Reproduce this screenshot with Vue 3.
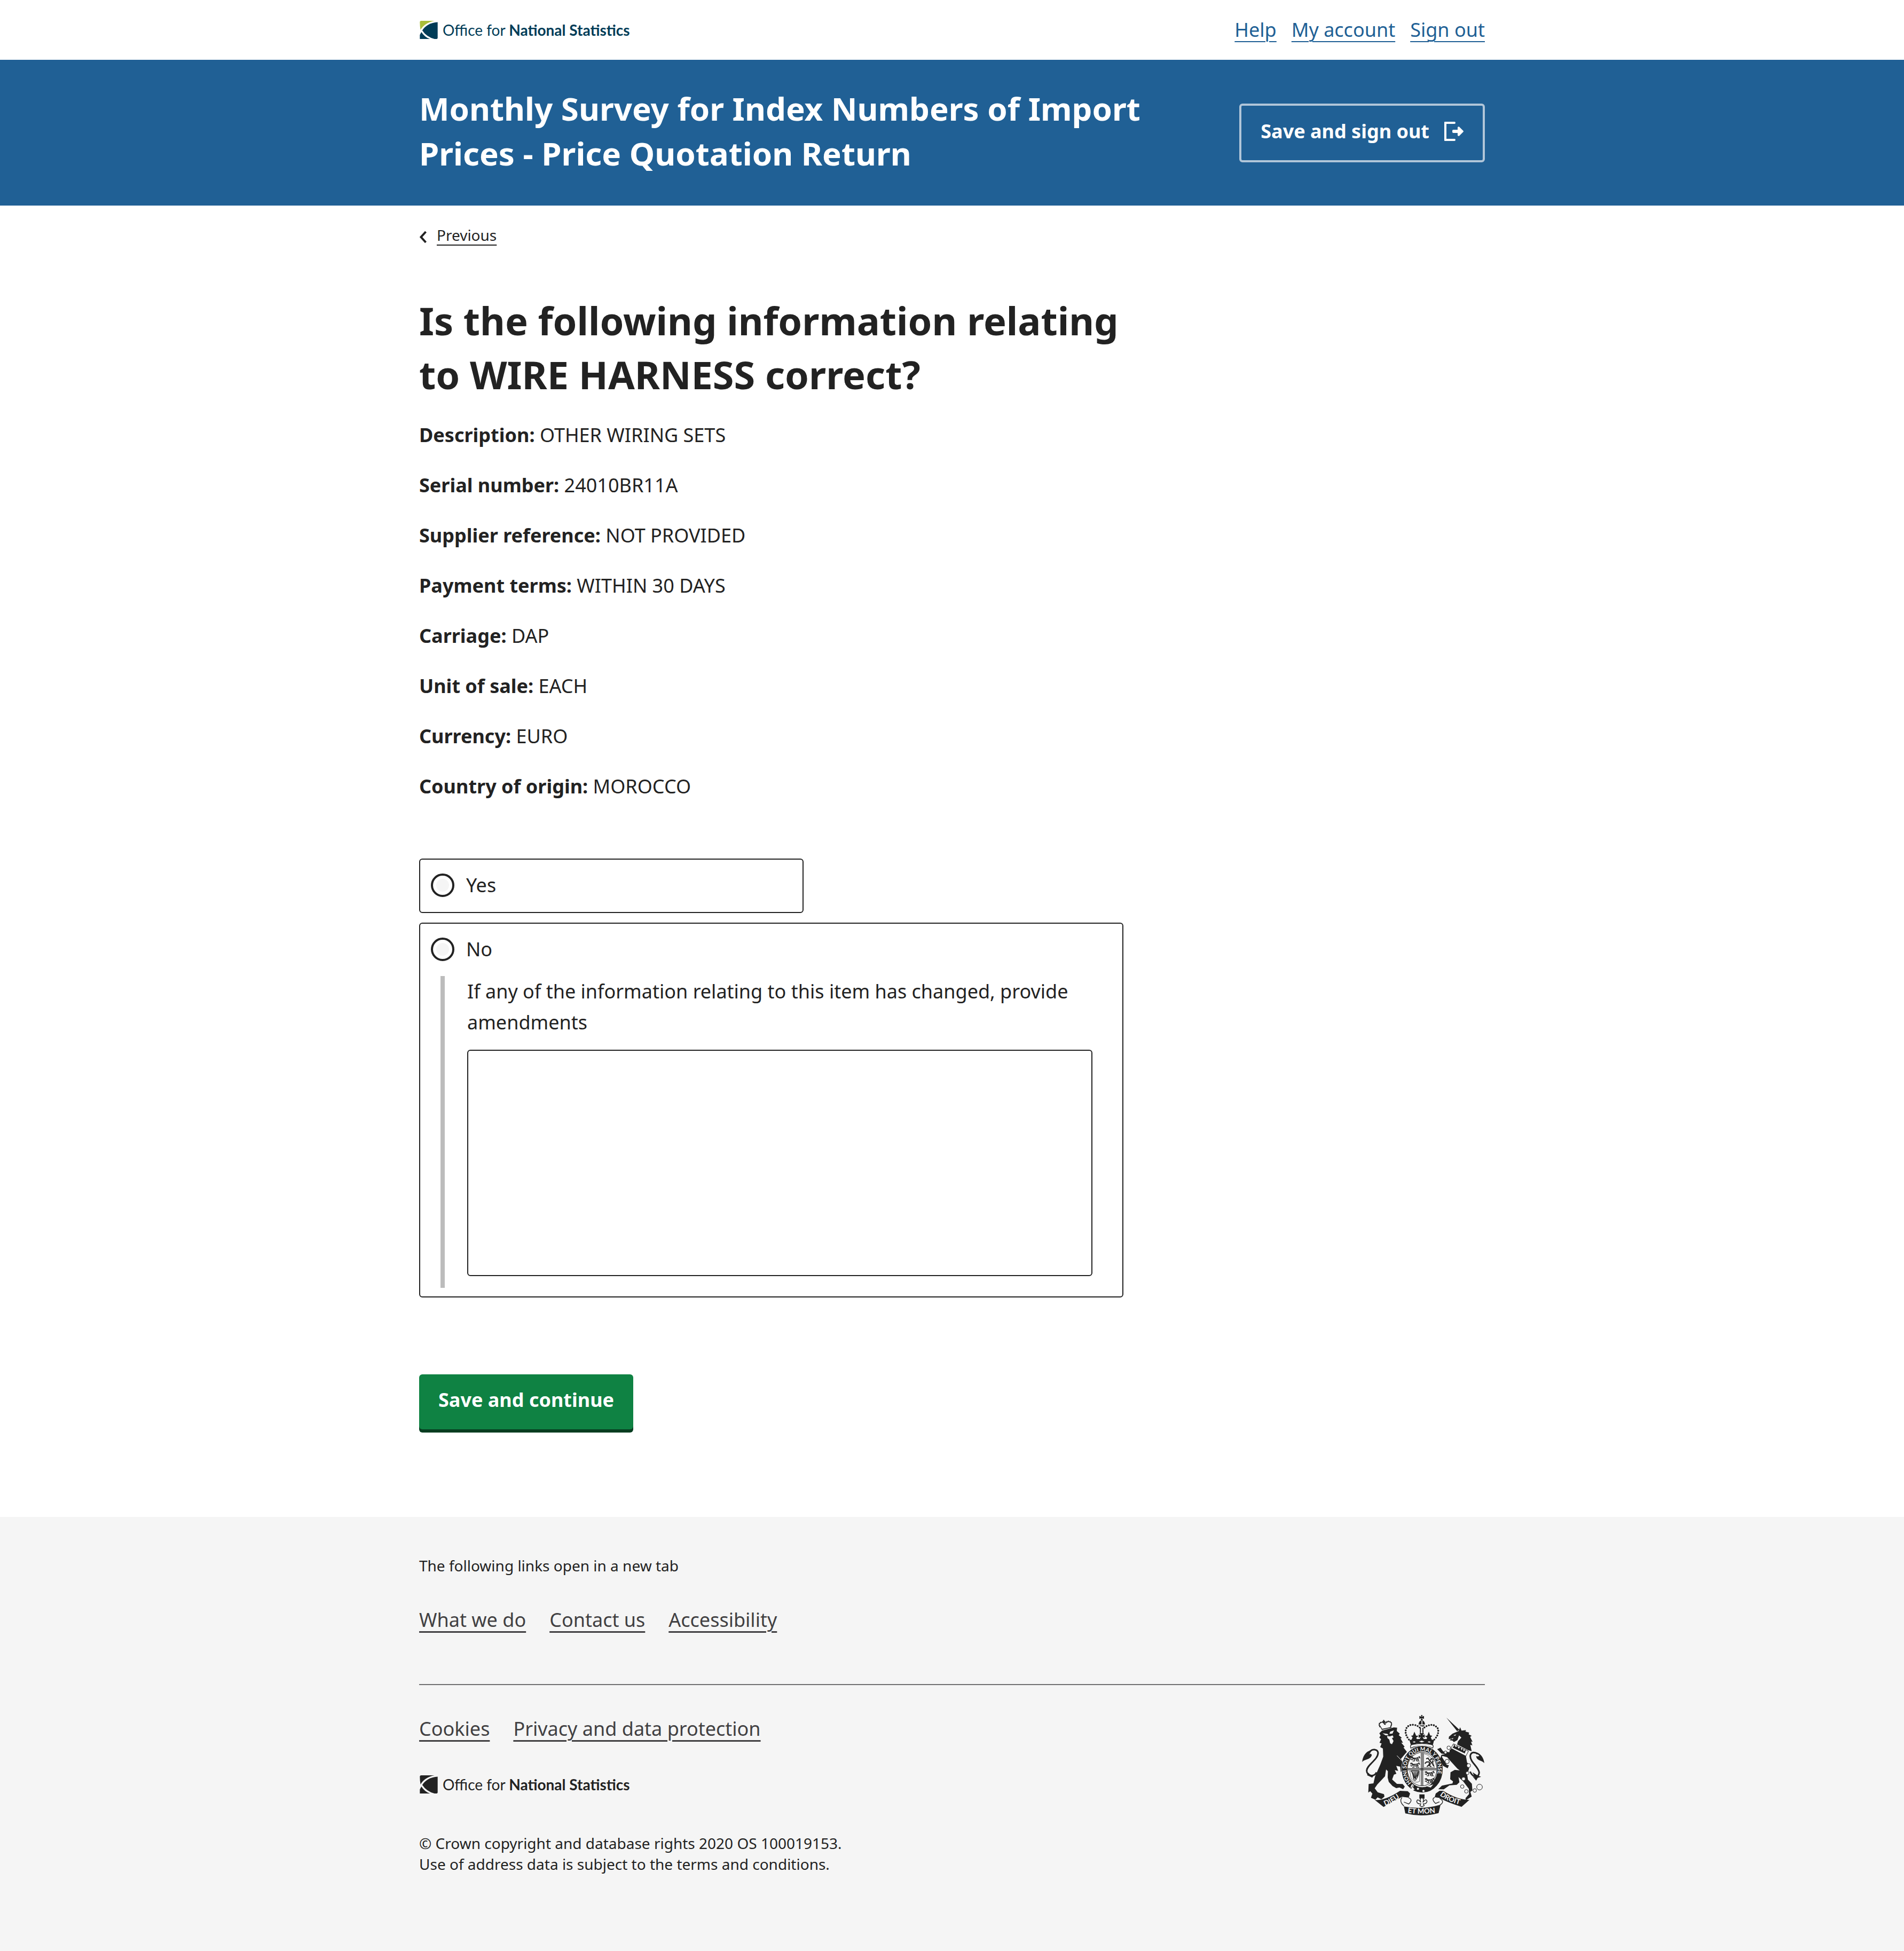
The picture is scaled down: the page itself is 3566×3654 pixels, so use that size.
<script setup>
import { ref } from 'vue'

const accountLinks = ['Help', 'My account', 'Sign out']
const details = [
  { term: 'Description:', value: 'OTHER WIRING SETS' },
  { term: 'Serial number:', value: '24010BR11A' },
  { term: 'Supplier reference:', value: 'NOT PROVIDED' },
  { term: 'Payment terms:', value: 'WITHIN 30 DAYS' },
  { term: 'Carriage:', value: 'DAP' },
  { term: 'Unit of sale:', value: 'EACH' },
  { term: 'Currency:', value: 'EURO' },
  { term: 'Country of origin:', value: 'MOROCCO' }
]
const aboutLinks = ['What we do', 'Contact us', 'Accessibility']
const legalLinks = ['Cookies', 'Privacy and data protection']
const answer = ref('')
const amendments = ref('')
</script>

<template>
  <div class="page">
    <header>
      <div class="container masthead">
        <a class="logo" href="#">
          <svg class="logo-mark" viewBox="0 0 102 104" aria-hidden="true">
            <path class="leaf" d="M0 8Q0 0 8 0H84Q26 12 4 52Q0 30 0 8Z" />
            <path d="M102 8V96Q102 104 93 104H84Q38 92 14 55Q42 12 102 8Z" />
            <path d="M9 64Q28 94 58 104H0V80Z" />
          </svg>
          <span>Office for <b>National Statistics</b></span>
        </a>
        <nav class="account" aria-label="Account">
          <a v-for="link in accountLinks" :key="link" href="#">{{ link }}</a>
        </nav>
      </div>
      <div class="banner">
        <div class="container banner-row">
          <p class="survey-title">Monthly Survey for Index Numbers of Import Prices - Price Quotation Return</p>
          <button class="exit" type="button">
            Save and sign out
            <svg class="exit-icon" viewBox="0 0 36 36" aria-hidden="true">
              <path d="M1 0H19Q21 0 21 2Q21 4 19 4H4V32H19Q21 32 21 34Q21 36 19 36H1Q0 36 0 35V1Q0 0 1 0Z" />
              <path d="M17 15H25V10.500Q26 8.500 28 9.500L35.500 17Q36.500 18 35.500 19L28 26.500Q26 27.500 25 25.500V21H17Q15 21 15 19V17Q15 15 17 15Z" />
            </svg>
          </button>
        </div>
      </div>
    </header>

    <main class="container">
      <a class="previous" href="#">
        <svg viewBox="0 0 14 24" aria-hidden="true"><path d="M12 2L3 12L12 22" /></svg>
        <span>Previous</span>
      </a>
      <form class="question" @submit.prevent>
        <h1>Is the following information relating to WIRE HARNESS correct?</h1>
        <p v-for="item in details" :key="item.term" class="detail">
          <strong>{{ item.term }}</strong> {{ item.value }}
        </p>
        <div class="options" role="radiogroup" aria-label="Is the information correct?">
          <div class="option option-short">
            <label class="option-label" for="answer-yes">
              <input id="answer-yes" v-model="answer" type="radio" name="answer" value="yes" />
              Yes
            </label>
          </div>
          <div class="option">
            <label class="option-label" for="answer-no">
              <input id="answer-no" v-model="answer" type="radio" name="answer" value="no" />
              No
            </label>
            <div class="other">
              <label for="amendments">If any of the information relating to this item has changed, provide amendments</label>
              <textarea id="amendments" v-model="amendments"></textarea>
            </div>
          </div>
        </div>
        <button class="submit" type="submit">Save and continue</button>
      </form>
    </main>

    <footer>
      <div class="container">
        <p class="small">The following links open in a new tab</p>
        <nav class="footer-links" aria-label="About">
          <a v-for="link in aboutLinks" :key="link" href="#">{{ link }}</a>
        </nav>
        <hr />
        <div class="footer-base">
          <div>
            <nav class="footer-links" aria-label="Legal">
              <a v-for="link in legalLinks" :key="link" href="#">{{ link }}</a>
            </nav>
            <a class="logo logo-mono" href="#">
              <svg class="logo-mark" viewBox="0 0 102 104" aria-hidden="true">
                <path d="M0 8Q0 0 8 0H84Q26 12 4 52Q0 30 0 8Z" />
                <path d="M102 8V96Q102 104 93 104H84Q38 92 14 55Q42 12 102 8Z" />
                <path d="M9 64Q28 94 58 104H0V80Z" />
              </svg>
              <span>Office for <b>National Statistics</b></span>
            </a>
            <p class="small">
              © Crown copyright and database rights 2020 OS 100019153.<br />
              Use of address data is subject to the terms and conditions.
            </p>
          </div>
          <svg class="crest" viewBox="34 36 690 564" role="img" aria-label="Royal coat of arms">
            <defs>
              <path id="garter" d="M312 418A89 104 0 1 1 432 418" />
              <path id="dieu" d="M164 547Q217 526 272 480" />
              <path id="etmon" d="M290 585Q370 597 470 582" />
              <path id="droit" d="M470 487Q520 527 600 543" />
            </defs>
            <!-- lion -->
            <path d="M131 139L146 124L212 106L231 107L229 126L246 141L240 149L258 165L250 167L264 192L254 191L273 214L267 219L286 243L266 266L252 283L275 313L280 350L262 363L264 340L252 357L248 326L226 322L237 350L218 346L227 366L213 371L203 398L230 423L262 424L274 438L265 453L244 443L226 447L205 435L184 412L178 388L179 352L169 342L163 380L120 426L105 448L122 470L157 481L160 494L143 509L121 499L109 512L84 501L92 478L80 464L69 472L71 424L98 420L107 381L136 316L153 270L151 224L136 216L144 196L132 192L141 172L131 163L138 151Z" />
            <path class="line w9" d="M115 358C103 388 60 378 60 348C62 315 124 288 124 248C120 226 94 227 80 239" />
            <path d="M89 234C61 235 37 264 35 301C47 282 79 291 89 261Q84 247 74 259ZM70 360L84 379L105 370L91 388L62 374Z" />
            <path class="paper" d="M149 139L176 142L182 150L166 150ZM192 130L213 122L205 140L188 142ZM174 154L190 156L206 151L211 162L202 166L211 182L202 200L192 195L187 174L177 166Z" />
            <path class="light w3" d="M230 264L278 315L283 345" />
            <path class="line w4" d="M146 116L131 92Q131 78 151 76Q165 86 178 74Q203 73 200 87L192 107ZM144 118L199 105" />
            <path class="dots small-dots" d="M133 101Q122 78 148 76Q157 79 163 92Q167 70 184 71Q206 76 197 99" />
            <path d="M152 64H159V70H165V77H159V85H154V78H148V71H152Z" />
            <!-- crown -->
            <path class="dots" d="M297 174Q271 141 282 112Q297 86 330 92Q350 97 360 109M440 174Q469 144 460 112Q440 84 409 94Q392 98 382 109" />
            <path d="M365 36H374L371 46L382 41V58L371 54L376 66H363L368 54L356 58V41L368 46ZM351 89Q354 67 370 67Q386 68 388 89ZM354 94H386Q379 108 354 94ZM359 108H365V137H359ZM373 108H379V137H373ZM356 138H383L374 150L386 145V164L374 159L382 174H356L364 159L352 164V145L364 150Z" />
            <path d="M328 130L338 152L352 153L338 164L344 175H312L318 162L309 153L320 151ZM409 130L400 152L387 153L400 164L394 175H426L420 162L429 153L417 151Z" />
            <path d="M300 176Q370 165 439 176L432 204Q370 184 308 204Z" />
            <path class="line paper w4" d="M308 222Q300 203 320 201Q370 191 420 201Q441 204 431 222Q371 195 308 222Z" />
            <path class="paper" d="M318 187L328 184L336 188L326 191ZM354 185L369 180L385 185L369 190ZM402 187L411 184L421 188L411 191ZM368 68H373V94H368Z" />
            <!-- garter and shield -->
            <ellipse cx="372" cy="341" rx="117" ry="135" class="paper" />
            <ellipse cx="372" cy="341" rx="100" ry="116" class="line w30" />
            <text class="motto ring"><textPath href="#garter">HONI SOIT QUI MAL Y PENSE</textPath></text>
            <path class="paper" d="M302 452L312 426L328 424L320 444L330 454L312 463ZM398 437L434 426L420 443Z" />
            <path class="line w3" d="M309 450L325 425L314 421L305 439ZM328 441Q360 459 398 453" />
            <circle class="paper" cx="348" cy="451" r="6" /><circle class="paper" cx="379" cy="463" r="6" />
            <ellipse class="line paper w3" cx="371" cy="340" rx="83" ry="94" />
            <path class="line w4" d="M367 248V432M375 248V432M289 337H454M289 344H454" />
            <path class="line w2" d="M380 252Q430 263 441 331H380ZM302 351H357V409Q329 425 309 389Z" />
            <path class="line w4" d="M310 350L352 350Q355 374 336 401Q326 407 323 393Q321 366 310 350M319 356L328 391M327 355L332 395M335 355V395M343 354L339 387M349 355L343 381" />
            <g v-for="spot in [[304,267],[302,302],[384,350],[384,389]]" :key="spot.join('-')" :transform="`translate(${spot[0]} ${spot[1]})`">
              <path class="line w4" d="M2 6L12 4L18 11L38 10L47 15L44 27L53 28M18 10L12 21L3 18M22 13L25 27L14 28M39 15L34 24L41 29M37 10L49 5L56 12L51 0M4 11L13 9L20 15L45 18" />
            </g>
            <path class="line w6" d="M394 282L405 278L414 293L428 307L437 324M414 293L424 281L437 286M411 299L396 300L387 309M414 300L410 316L398 326M421 307L411 319L423 327M427 304L435 292" />
            <!-- unicorn -->
            <path d="M508 51L581 119L568 127ZM522 158L542 141L577 126L585 105L593 124L618 121L615 129L636 135L633 145L650 153L641 159L655 187L646 185L654 207L642 203L650 239L629 233L568 202L573 184L592 163L579 151L570 177L550 188L542 180L526 178L535 169L521 172Z" />
            <path class="paper" d="M547 150L563 145L557 153ZM536 168L549 166L540 173Z" />
            <path d="M541 220L617 264L624 303L640 319L633 345L624 367L629 399L651 422L654 460L643 468L650 494L617 515L615 503L635 481L634 451L602 409L576 385L581 414L566 428L525 431L493 454L462 453L483 433L542 421L545 409L529 397L531 358L555 344L583 347L569 337L546 311L524 287L512 273L487 266L482 270L510 316L522 319L515 335L489 322L471 286L480 260L500 256L480 253L456 228L475 220L490 241L525 245L526 234Z" />
            <path class="line paper w3" d="M547 198L632 239L617 267L533 223Z" />
            <path d="M548 213L551 200L560 216L570 210L576 225L588 215L592 234L602 223L604 240L619 229L611 252L542 219Z" />
            <path class="line w9" d="M641 354C657 389 689 391 692 360C691 329 640 301 642 265C646 241 669 244 684 255" />
            <path d="M671 245C700 249 718 276 721 307C709 288 678 296 675 266Q685 272 693 265ZM655 358L667 386L655 381L675 405L684 389L703 383L683 376Z" />
            <g class="line w3">
              <circle cx="521" cy="220" r="10" class="paper" /><circle cx="512" cy="297" r="12" class="paper" />
              <circle cx="503" cy="246" r="8" class="paper" /><circle cx="633" cy="320" r="11" class="paper" />
              <circle cx="626" cy="362" r="9" class="paper" /><circle cx="604" cy="395" r="10" class="paper" />
              <circle cx="597" cy="438" r="10" /><circle cx="620" cy="465" r="10" />
              <circle cx="667" cy="460" r="10" /><circle cx="694" cy="441" r="16" />
            </g>
            <!-- motto ribbon -->
            <path d="M105 513Q160 520 247 462L291 464L304 477L296 500L259 496Q209 520 155 553ZM637 513Q567 512 490 462H469L448 477L442 498L468 502Q515 528 593 552ZM269 550Q371 570 475 540L464 587Q371 612 277 589Z" />
            <path class="line w4" d="M259 499Q240 521 270 548M295 501Q323 512 296 536L269 525M470 504Q502 523 472 542M442 499Q421 508 447 533L469 524" />
            <path d="M356 482H385V506H356Z" />
            <path class="line paper w4" d="M370 497L380 512L376 527Q395 501 399 522Q395 537 378 535L383 545L370 552L359 545L364 535Q344 537 341 522Q346 502 364 527L360 512Z" />
            <text class="motto"><textPath href="#dieu">DIEU</textPath></text>
            <text class="motto"><textPath href="#etmon">ET MON</textPath></text>
            <text class="motto"><textPath href="#droit">DROIT</textPath></text>
          </svg>
        </div>
      </div>
    </footer>
  </div>
</template>

<style>
body {
  margin: 0;
  background: #fff;
}
</style>

<style scoped>
.page {
  color: #222;
  font: 36px/58px "Noto Sans", sans-serif;
}
h1, p { margin: 0; }
button, textarea { font: inherit; }
.container {
  box-sizing: border-box;
  width: 100%;
  max-width: 1996px;
  margin: 0 auto;
}
.masthead {
  display: flex;
  justify-content: space-between;
  align-items: center;
  padding: 27px 0;
}
.logo {
  display: flex;
  align-items: center;
  gap: 8px;
  width: max-content;
  color: #003c57;
  font: 400 28px/34px Lato, sans-serif;
  text-decoration: none;
}
.logo b { font-weight: 700; }
.logo-mark {
  width: 36px;
  height: 34px;
  fill: currentColor;
}
.logo-mark .leaf { fill: #a8bd3a; }
.account {
  display: flex;
  gap: 28px;
}
.account a {
  color: #206095;
  text-decoration-thickness: 2px;
  text-underline-offset: 8px;
}
.banner {
  padding: 49px 0 48px;
  background: #206095;
  color: #fff;
}
.banner-row {
  display: flex;
  justify-content: space-between;
  align-items: center;
}
.survey-title {
  max-width: 1400px;
  margin-bottom: 8px;
  font-size: 60px;
  font-weight: 700;
  line-height: 84px;
}
.exit {
  display: flex;
  align-items: center;
  gap: 28px;
  padding: 20px 36px 26px;
  border: 4px solid #b1c6d9;
  border-radius: 6px;
  background: transparent;
  color: #fff;
  font-weight: 700;
  line-height: 56px;
  white-space: nowrap;
}
.exit-icon {
  width: 36px;
  height: 36px;
  fill: currentColor;
}
.previous {
  display: flex;
  align-items: center;
  gap: 18px;
  width: max-content;
  margin-top: 36px;
  color: #222;
  font-size: 28px;
  line-height: 39px;
  text-decoration: none;
}
.previous svg {
  width: 15px;
  height: 24px;
  margin-top: 6px;
  fill: none;
  stroke: currentColor;
  stroke-width: 4;
}
.previous span {
  text-decoration: underline;
  text-decoration-thickness: 2px;
  text-underline-offset: 7px;
}
.question {
  max-width: 1319px;
  margin-top: 90px;
}
h1 {
  margin-bottom: 34px;
  font-size: 72px;
  font-weight: 700;
  line-height: 101px;
}
.detail + .detail { margin-top: 36px; }
.options {
  display: flex;
  flex-direction: column;
  gap: 18px;
  margin: 106px 0 144px;
}
.option {
  border: 2px solid #222;
  border-radius: 6px;
}
.option-short {
  box-sizing: border-box;
  width: 720px;
  max-width: 100%;
}
.option-label {
  display: flex;
  align-items: center;
  gap: 22px;
  padding: 20px 20px 22px;
  line-height: 56px;
}
.option-label input {
  appearance: none;
  box-sizing: border-box;
  width: 44px;
  height: 44px;
  margin: 0;
  padding: 6px;
  border: 4px solid #222;
  border-radius: 50%;
  background: #f5f5f5 content-box;
}
.option-label input:checked { background-color: #222; }
.other {
  display: flex;
  flex-direction: column;
  gap: 22px;
  margin: 0 56px 16px 38px;
  padding: 0 0 22px 42px;
  border-left: 8px solid #bcbcbc;
}
textarea {
  box-sizing: border-box;
  width: 100%;
  height: 424px;
  padding: 12px 16px;
  border: 2px solid #222;
  border-radius: 6px;
  color: inherit;
  resize: none;
}
.submit {
  display: block;
  padding: 20px 36px 27px;
  border: 0;
  border-radius: 6px;
  background: #0f8243;
  box-shadow: 0 6px 0 #073d20;
  color: #fff;
  font-weight: 700;
  line-height: 56px;
}
footer {
  margin-top: 164px;
  padding: 72px 0 143px;
  background: #f5f5f5;
}
.small {
  font-size: 28px;
  line-height: 39px;
}
.footer-links {
  display: flex;
  gap: 44px;
  margin-top: 53px;
}
.footer-links a {
  color: #414042;
  text-decoration-thickness: 3px;
  text-underline-offset: 8px;
}
hr {
  height: 2px;
  margin: 91px 0 0;
  border: 0;
  background: #707071;
}
.footer-base {
  display: flex;
  justify-content: space-between;
  align-items: flex-start;
}
.logo-mono {
  margin: 58px 0 74px;
  color: #222;
}
.crest {
  width: 230px;
  height: 188px;
  margin-top: 56px;
  fill: #222;
}
.line {
  fill: none;
  stroke: #222;
}
.paper { fill: #f5f5f5; }
.light {
  fill: none;
  stroke: #f5f5f5;
}
.w2 { stroke-width: 2; }
.w3 { stroke-width: 3; }
.w4 { stroke-width: 4; }
.w6 { stroke-width: 6; }
.w9 { stroke-width: 9; }
.w30 { stroke-width: 30; }
.dots {
  fill: none;
  stroke: #222;
  stroke-width: 11;
  stroke-linecap: round;
  stroke-dasharray: 0 14;
}
.small-dots {
  stroke-width: 7;
  stroke-dasharray: 0 9;
}
.motto {
  fill: #f5f5f5;
  font: 700 40px Lato, sans-serif;
}
.ring { font-size: 30px; }
</style>
